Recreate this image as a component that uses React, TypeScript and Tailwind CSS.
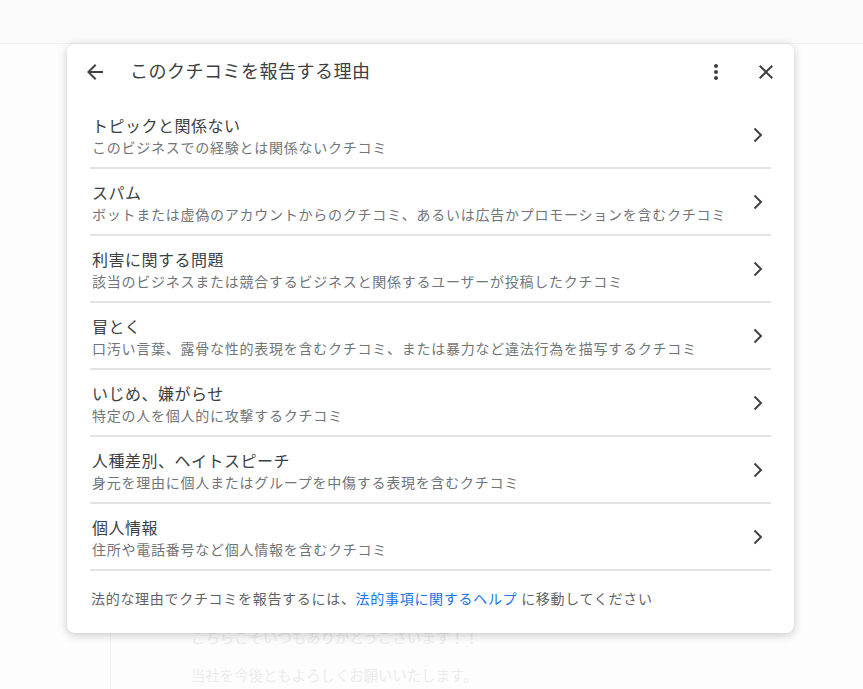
import React from "react";

const reasons = [
  { title: "トピックと関係ない", desc: "このビジネスでの経験とは関係ないクチコミ" },
  { title: "スパム", desc: "ボットまたは虚偽のアカウントからのクチコミ、あるいは広告かプロモーションを含むクチコミ" },
  { title: "利害に関する問題", desc: "該当のビジネスまたは競合するビジネスと関係するユーザーが投稿したクチコミ" },
  { title: "冒とく", desc: "口汚い言葉、露骨な性的表現を含むクチコミ、または暴力など違法行為を描写するクチコミ" },
  { title: "いじめ、嫌がらせ", desc: "特定の人を個人的に攻撃するクチコミ" },
  { title: "人種差別、ヘイトスピーチ", desc: "身元を理由に個人またはグループを中傷する表現を含むクチコミ" },
  { title: "個人情報", desc: "住所や電話番号など個人情報を含むクチコミ" },
];

const font = { fontFamily: '"Noto Sans CJK JP", "Noto Sans", sans-serif' };

export default function App() {
  return (
    <div className="relative h-[689px] w-full overflow-hidden bg-[#fdfdfd]" style={font}>
      {/* faded page behind the dialog */}
      <div className="h-[44px] border-b border-[#f0f0f0] bg-[#fafafa]" />
      <div className="ml-[110px] mt-[574px] h-[80px] border-l border-[#f1f1f1] pl-[80px] text-[14.4px] leading-[38px] text-[#ececec]">
        <p>こちらこそいつもありがとうございます！！</p>
        <p>当社を今後ともよろしくお願いいたします。</p>
      </div>

      {/* dialog */}
      <div className="absolute left-[67px] top-[44px] w-[727px] rounded-[8px] bg-white shadow-[0_2px_10px_rgba(0,0,0,0.22)]">
        <div className="flex h-[58px] items-center pb-[2px] pl-[16px] pr-[16px]">
          <svg width="24" height="24" viewBox="0 0 24 24" fill="#3c4043">
            <path d="M20 11H7.83l5.59-5.59L12 4l-8 8 8 8 1.41-1.41L7.83 13H20v-2z" />
          </svg>
          <div className="ml-[23px] flex-1 pb-[3px] text-[18px] tracking-[0.5px] text-[#3c4043]">
            このクチコミを報告する理由
          </div>
          <svg width="24" height="24" viewBox="0 0 24 24" fill="#3c4043">
            <path d="M12 8c1.1 0 2-.9 2-2s-.9-2-2-2-2 .9-2 2 .9 2 2 2zm0 2c-1.1 0-2 .9-2 2s.9 2 2 2 2-.9 2-2-.9-2-2-2zm0 6c-1.1 0-2 .9-2 2s.9 2 2 2 2-.9 2-2-.9-2-2-2z" />
          </svg>
          <svg className="ml-[26px]" width="24" height="24" viewBox="0 0 24 24" fill="#3c4043">
            <path d="M19 6.41L17.59 5 12 10.59 6.41 5 5 6.41 10.59 12 5 17.59 6.41 19 12 13.41 17.59 19 19 17.59 13.41 12z" />
          </svg>
        </div>

        <div className="mx-[23px]">
          {reasons.map((r, i) => (
            <div
              key={i}
              className="flex items-center border-b-[2px] border-[#e3e3e3] pb-[10px] pl-[2px] pr-[2px] pt-[11px]"
            >
              <div className="flex-1">
                <div className="text-[16px] leading-[24px] tracking-[0.5px] text-[#3c4043]">{r.title}</div>
                <div className="text-[14px] leading-[20px] tracking-[0.75px] text-[#70757a]">{r.desc}</div>
              </div>
              <svg width="24" height="24" viewBox="0 0 24 24" fill="none" stroke="#3c4043" strokeWidth="1.9">
                <path d="M9.5 5.5l6.5 6.5-6.5 6.5" />
              </svg>
            </div>
          ))}
        </div>

        <div className="px-[24px] pb-[25px] pt-[17px] text-[14px] leading-[20px] tracking-[0.7px] text-[#5f6368]">
          法的な理由でクチコミを報告するには、<span className="text-[#1a73e8]">法的事項に関するヘルプ</span> に移動してください
        </div>
      </div>
    </div>
  );
}
